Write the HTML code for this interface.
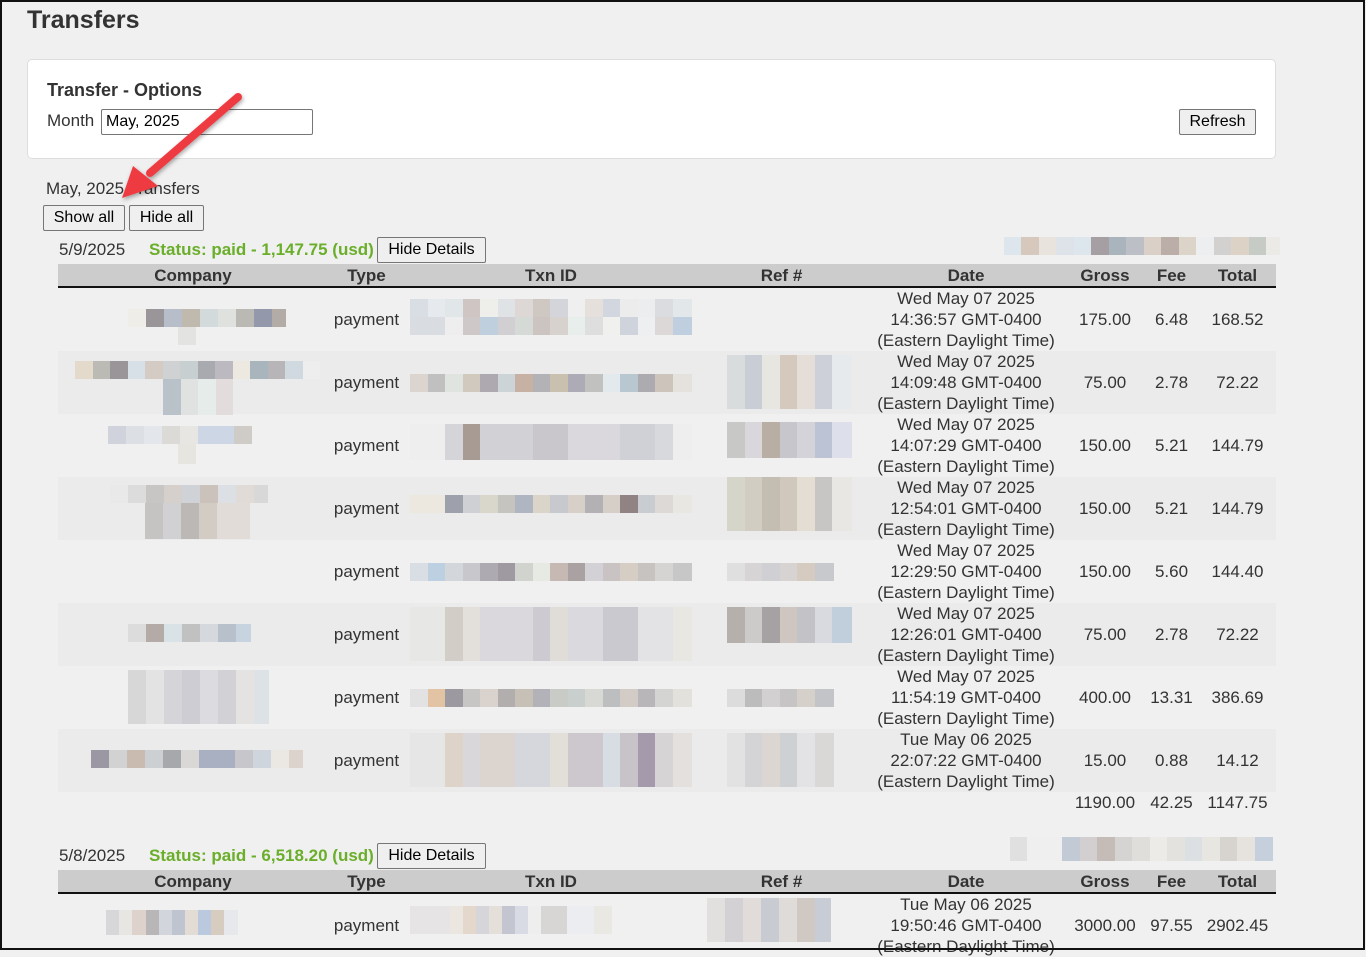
<!DOCTYPE html>
<html><head><meta charset="utf-8">
<style>
*{box-sizing:border-box}
html,body{margin:0;padding:0}
body{width:1366px;height:951px;overflow:hidden;background:#f0f0f0;font-family:"Liberation Sans",Arial,sans-serif;color:#333;position:relative}
.frame{position:absolute;left:0;top:0;width:1365px;height:950px;border:2px solid #111;pointer-events:none;z-index:5}
.abs{position:absolute}
h1{position:absolute;left:27px;top:6px;margin:0;font-size:25px;font-weight:bold;color:#333}
.card{position:absolute;left:27px;top:59px;width:1249px;height:100px;background:#fff;border:1px solid #ddd;border-radius:5px}
.btn{position:absolute;background:#efefef;border:1px solid #767676;border-radius:2px;font-size:16px;color:#000;text-align:center;line-height:23px;height:26px}
.green{color:#6aae2a;font-weight:bold}
table{position:absolute;left:58px;width:1218px;border-collapse:collapse;table-layout:fixed;font-size:17px;color:#333}
th{background:#ccc;height:23px;font-weight:bold;border-bottom:2px solid #111;padding:0;line-height:21px}
td{height:63px;padding:0;text-align:center;line-height:21px;position:relative}
tr.alt td{background:#ebebeb}
.px{position:absolute;height:18px}
</style></head><body>
<div class="frame"></div>
<h1>Transfers</h1>
<div class="card">
 <div class="abs" style="left:19px;top:20px;font-size:18px;font-weight:bold">Transfer - Options</div>
 <div class="abs" style="left:19px;top:51px;font-size:17px">Month</div>
 <div class="abs" style="left:73px;top:49px;width:212px;height:26px;border:1px solid #767676;border-radius:2px;font-size:16px;color:#000;padding:3px 0 0 4px">May, 2025</div>
 <div class="btn" style="left:1151px;top:49px;width:77px">Refresh</div>
</div>
<div class="abs" style="left:46px;top:179px;font-size:17px">May, 2025 Transfers</div>
<div class="btn" style="left:43px;top:205px;width:82px">Show all</div>
<div class="btn" style="left:129px;top:205px;width:75px">Hide all</div>

<div class="abs" style="left:59px;top:240px;font-size:17px">5/9/2025</div>
<div class="abs green" style="left:149px;top:240px;font-size:17px">Status: paid - 1,147.75 (usd)</div>
<div class="btn" style="left:377px;top:237px;width:109px">Hide Details</div>
<div class="px" style="left:1004px;top:237px;width:276px;background:linear-gradient(90deg,#dce6ec 0 17px,#d6c8bc 0 35px,#e8e4dd 0 52px,#dde3e8 0 70px,#dce6ec 0 87px,#a59ea2 0 105px,#a9b4bd 0 122px,#bcc0c6 0 140px,#dbd0c8 0 157px,#bbaea8 0 175px,#dcd3c9 0 192px,#eceef0 0 210px,#d2d1cf 0 227px,#dcd3c6 0 245px,#c6cbc5 0 262px,#eceae6 0)"></div>

<table style="top:264px">
<colgroup><col style="width:270px"><col style="width:77px"><col style="width:292px"><col style="width:169px"><col style="width:200px"><col style="width:78px"><col style="width:55px"><col style="width:77px"></colgroup>
<tr><th>Company</th><th>Type</th><th>Txn ID</th><th>Ref #</th><th>Date</th><th>Gross</th><th>Fee</th><th>Total</th></tr>
<tr><td><div class="px" style="left:70px;top:21px;width:158px;background:linear-gradient(90deg,#efede8 0 18px,#9a9598 0 36px,#b8bec9 0 54px,#c0b9ae 0 72px,#d3dadb 0 90px,#dfe1df 0 108px,#bbb9b4 0 126px,#9498ab 0 144px,#b3aba5 0 162px)"></div><div class="px" style="left:120px;top:39px;width:18px;background:#e3e3e1"></div></td><td>payment</td><td><div class="px" style="left:5px;top:11px;width:282px;background:linear-gradient(90deg,#d9dee5 0 18px,#e6eaee 0 35px,#e1e7e9 0 53px,#cfc6c4 0 70px,#eeeeea 0 88px,#e0e3e6 0 105px,#ddd8d5 0 123px,#cfc7c2 0 140px,#d3d5db 0 158px,#efefef 0 175px,#e5e0dc 0 193px,#d2d6de 0 210px,#ececec 0 228px,#ecedef 0 245px,#dadce0 0 263px,#e2e8ea 0)"></div><div class="px" style="left:5px;top:29px;width:282px;background:linear-gradient(90deg,#d9dde1 0 35px,#eee 0 53px,#cfc8c8 0 70px,#bfcfdd 0 88px,#d2cfd2 0 105px,#d5dad6 0 123px,#cbc4c0 0 140px,#d8d2ce 0 158px,#e8eeec 0 175px,#dedede 0 193px,#f0f0ee 0 210px,#cfd3dc 0 228px,#eeeff1 0 245px,#ddd8d8 0 263px,#bfcfe0 0)"></div></td><td></td><td>Wed May 07 2025<br>14:36:57 GMT-0400<br>(Eastern Daylight Time)</td><td>175.00</td><td>6.48</td><td>168.52</td></tr>
<tr class="alt"><td><div class="px" style="left:17px;top:10px;width:245px;background:linear-gradient(90deg,#e4dacb 0 18px,#bcbab4 0 35px,#9a9598 0 53px,#d8e0e7 0 70px,#d3cbc4 0 88px,#cfd1d3 0 105px,#c8cfd1 0 123px,#a8aaaf 0 140px,#bdb9c0 0 158px,#ede8e0 0 175px,#a8b5bd 0 193px,#b7b5b8 0 210px,#d1d9e0 0 228px,#eee 0)"></div><div class="px" style="left:105px;top:28px;width:70px;height:36px;background:linear-gradient(90deg,#b9c2c9 0 18px,#dfe2e0 0 35px,#e6ecea 0 53px,#e3dcdc 0)"></div></td><td>payment</td><td><div class="px" style="left:5px;top:23px;width:282px;background:linear-gradient(90deg,#dcd4cf 0 18px,#c0c0c1 0 35px,#e0e4e0 0 53px,#d1c9be 0 70px,#aea9b0 0 88px,#cdd4d8 0 105px,#c7b1a3 0 123px,#b2b2b7 0 140px,#cac0b0 0 158px,#adacb6 0 175px,#c1c2bf 0 193px,#e2eaee 0 210px,#b9c7d1 0 228px,#adabb0 0 245px,#cdc5bc 0 263px,#e5e1dc 0)"></div></td><td><div class="px" style="left:30px;top:4px;width:125px;height:54px;background:linear-gradient(90deg,#d9dcdc 0 18px,#c9cdd6 0 35px,#e8e6e0 0 53px,#d5c9bd 0 70px,#e5ded8 0 88px,#cdd0d8 0 105px,#e6eaec 0)"></div></td><td>Wed May 07 2025<br>14:09:48 GMT-0400<br>(Eastern Daylight Time)</td><td>75.00</td><td>2.78</td><td>72.22</td></tr>
<tr><td><div class="px" style="left:50px;top:12px;width:160px;background:linear-gradient(90deg,#d1d3dc 0 18px,#dcdfe3 0 36px,#e3e6ea 0 54px,#dcdad7 0 72px,#e7e6e3 0 90px,#ccd6e4 0 126px,#cfcbc6 0 144px,#f0f0f0 0)"></div><div class="px" style="left:120px;top:30px;width:18px;height:20px;background:#e7e5e0"></div></td><td>payment</td><td><div class="px" style="left:5px;top:10px;width:282px;height:36px;background:linear-gradient(90deg,#eee 0 35px,#d5d4d9 0 53px,#a89b93 0 70px,#d2d1d5 0 123px,#c9c7cc 0 158px,#dad8dc 0 210px,#cfd1d6 0 245px,#d8d9dd 0 263px,#eee 0)"></div></td><td><div class="px" style="left:30px;top:8px;width:125px;height:36px;background:linear-gradient(90deg,#c8c9c6 0 18px,#d9d7db 0 35px,#b8aea3 0 53px,#c7c6cc 0 70px,#d4d3da 0 88px,#bcc3d4 0 105px,#dde0ea 0)"></div></td><td>Wed May 07 2025<br>14:07:29 GMT-0400<br>(Eastern Daylight Time)</td><td>150.00</td><td>5.21</td><td>144.79</td></tr>
<tr class="alt"><td><div class="px" style="left:52px;top:8px;width:158px;background:linear-gradient(90deg,#e9e9e9 0 18px,#dcdcdc 0 36px,#c8c6c4 0 54px,#d6d0cd 0 72px,#cfd2d6 0 90px,#cbc2bb 0 108px,#dcdfe3 0 126px,#e0dbd6 0 144px,#d8d8d8 0)"></div><div class="px" style="left:87px;top:26px;width:105px;height:36px;background:linear-gradient(90deg,#c6c4c2 0 18px,#d1d1d4 0 36px,#bcb8b5 0 54px,#d3ccc4 0 72px,#e1dcd7 0)"></div></td><td>payment</td><td><div class="px" style="left:5px;top:18px;width:282px;background:linear-gradient(90deg,#ece8e0 0 35px,#9ea1ab 0 53px,#cfd0d4 0 70px,#d9d6cc 0 88px,#c6c4bf 0 105px,#b0b6c1 0 123px,#dad4c9 0 140px,#c7c9ce 0 158px,#d6d0c8 0 175px,#b3b1b4 0 193px,#d5cfc7 0 210px,#918383 0 228px,#c9cdd1 0 245px,#ddd9d6 0 263px,#e9e7e2 0)"></div></td><td><div class="px" style="left:30px;top:0;width:125px;height:54px;background:linear-gradient(90deg,#d5d6c9 0 18px,#d1cdc2 0 35px,#c4bdb2 0 53px,#d0c8bd 0 70px,#e3ddd3 0 88px,#c8c6c4 0 105px,#e8e7e4 0)"></div></td><td>Wed May 07 2025<br>12:54:01 GMT-0400<br>(Eastern Daylight Time)</td><td>150.00</td><td>5.21</td><td>144.79</td></tr>
<tr><td></td><td>payment</td><td><div class="px" style="left:5px;top:23px;width:282px;background:linear-gradient(90deg,#d9dee5 0 18px,#bdd0e2 0 35px,#d3d6db 0 53px,#c8c7cc 0 70px,#aeaab2 0 88px,#9f9aa2 0 105px,#d1d3cf 0 123px,#e7e9e3 0 140px,#c6b9b3 0 158px,#aaa1a3 0 175px,#d4d1d6 0 193px,#c9c3c3 0 210px,#d6cdc4 0 228px,#c6c3c1 0 245px,#d5d4d2 0 263px,#c7c7c7 0)"></div></td><td><div class="px" style="left:30px;top:23px;width:107px;background:linear-gradient(90deg,#dfdfdf 0 18px,#d6d4d4 0 35px,#cfcfd4 0 53px,#d7d3d2 0 70px,#d5cbc0 0 88px,#c7c9cc 0)"></div></td><td>Wed May 07 2025<br>12:29:50 GMT-0400<br>(Eastern Daylight Time)</td><td>150.00</td><td>5.60</td><td>144.40</td></tr>
<tr class="alt"><td><div class="px" style="left:70px;top:21px;width:123px;background:linear-gradient(90deg,#dcdcdc 0 18px,#b4aba6 0 36px,#d9e2e6 0 54px,#c1c1c1 0 72px,#d5d8dc 0 90px,#b7c0cb 0 108px,#c7d3de 0)"></div></td><td>payment</td><td><div class="px" style="left:5px;top:4px;width:282px;height:54px;background:linear-gradient(90deg,#e7e7e6 0 35px,#d3cdc8 0 53px,#e3e0dc 0 70px,#dad8dc 0 123px,#cdcbd1 0 140px,#e0ddd9 0 158px,#d9d9de 0 193px,#c9c9cf 0 228px,#e3e2e4 0 263px,#e9e7e1 0)"></div></td><td><div class="px" style="left:30px;top:4px;width:125px;height:36px;background:linear-gradient(90deg,#b6b0ad 0 18px,#cdcbc9 0 35px,#a6a1a3 0 53px,#cfc5c1 0 70px,#c3c2c6 0 88px,#d9dadf 0 105px,#c1cedb 0)"></div></td><td>Wed May 07 2025<br>12:26:01 GMT-0400<br>(Eastern Daylight Time)</td><td>75.00</td><td>2.78</td><td>72.22</td></tr>
<tr><td><div class="px" style="left:70px;top:4px;width:141px;height:54px;background:linear-gradient(90deg,#d7d7d7 0 18px,#e3e3e3 0 36px,#d5d4d9 0 54px,#cfcdd4 0 72px,#dcdbdf 0 90px,#d2d2d6 0 108px,#e5e3e1 0 126px,#dde2e7 0)"></div></td><td>payment</td><td><div class="px" style="left:5px;top:23px;width:282px;background:linear-gradient(90deg,#e2e2e2 0 18px,#e2c3a4 0 35px,#9c9aa0 0 53px,#c8c6c4 0 70px,#dad3cd 0 88px,#b3aeae 0 105px,#c7c0b6 0 123px,#b3b2b8 0 140px,#c9ccc6 0 158px,#c9cfcc 0 175px,#d8d8d4 0 193px,#bdbebf 0 210px,#d3ccc6 0 228px,#b8b6b8 0 245px,#d4d4d3 0 263px,#e3e1dc 0)"></div></td><td><div class="px" style="left:30px;top:23px;width:107px;background:linear-gradient(90deg,#dcdcdc 0 18px,#bcbcbc 0 35px,#d2d0d0 0 53px,#c6c4c5 0 70px,#d6d0ca 0 88px,#c3c4c8 0)"></div></td><td>Wed May 07 2025<br>11:54:19 GMT-0400<br>(Eastern Daylight Time)</td><td>400.00</td><td>13.31</td><td>386.69</td></tr>
<tr class="alt"><td><div class="px" style="left:33px;top:21px;width:212px;background:linear-gradient(90deg,#9b98a4 0 18px,#d3d2d3 0 36px,#c9bbaf 0 54px,#ccd0d3 0 72px,#a6a8ab 0 90px,#d9d8d6 0 108px,#a8b0c1 0 144px,#c7c7cb 0 162px,#cfd5dc 0 180px,#ebe8e4 0 198px,#dcd4cc 0)"></div></td><td>payment</td><td><div class="px" style="left:5px;top:4px;width:282px;height:54px;background:linear-gradient(90deg,#e6e6e6 0 35px,#ddd3c8 0 53px,#d9d7d9 0 70px,#dcd4cf 0 105px,#d6d7dc 0 140px,#e2ded8 0 158px,#ccc8cd 0 193px,#d8dde3 0 210px,#c8c3c8 0 228px,#a49aab 0 245px,#d7d4d6 0 263px,#e3e0dd 0)"></div></td><td><div class="px" style="left:30px;top:4px;width:107px;height:54px;background:linear-gradient(90deg,#e2e2e2 0 18px,#d4d4d6 0 35px,#dcd6d3 0 53px,#ced1d3 0 70px,#e3e3e5 0 88px,#d9d8d6 0)"></div></td><td>Tue May 06 2025<br>22:07:22 GMT-0400<br>(Eastern Daylight Time)</td><td>15.00</td><td>0.88</td><td>14.12</td></tr>
<tr><td style="height:21px"></td><td></td><td></td><td></td><td></td><td style="vertical-align:top">1190.00</td><td style="vertical-align:top">42.25</td><td style="vertical-align:top">1147.75</td></tr>
</table>

<div class="abs" style="left:59px;top:846px;font-size:17px">5/8/2025</div>
<div class="abs green" style="left:149px;top:846px;font-size:17px">Status: paid - 6,518.20 (usd)</div>
<div class="btn" style="left:377px;top:843px;width:109px">Hide Details</div>
<div class="px" style="left:1010px;top:837px;width:263px;height:24px;background:linear-gradient(90deg,#e0e0e0 0 17px,#efefef 0 52px,#c2cad6 0 70px,#d3cfd0 0 87px,#c5bcb8 0 105px,#d6d4d2 0 122px,#e0dedb 0 140px,#ecebe7 0 157px,#e4e2df 0 175px,#dde0e3 0 192px,#e8e6e1 0 210px,#d7d4d0 0 227px,#e6e3df 0 245px,#c6cfdc 0)"></div>

<table style="top:870px">
<colgroup><col style="width:270px"><col style="width:77px"><col style="width:292px"><col style="width:169px"><col style="width:200px"><col style="width:78px"><col style="width:55px"><col style="width:77px"></colgroup>
<tr><th>Company</th><th>Type</th><th>Txn ID</th><th>Ref #</th><th>Date</th><th>Gross</th><th>Fee</th><th>Total</th></tr>
<tr><td style="vertical-align:top;padding-top:0"><div class="px" style="left:48px;top:16px;width:132px;height:25px;background:linear-gradient(90deg,#d7d7da 0 13px,#e8e6e3 0 26px,#ddd3cc 0 40px,#b8b6b6 0 53px,#d3d5dd 0 66px,#bec5d0 0 79px,#e3dcd4 0 92px,#bac9de 0 105px,#d7ccc0 0 118px,#e6e8ec 0)"></div></td><td style="vertical-align:top;padding-top:21px">payment</td><td><div class="px" style="left:5px;top:12px;width:202px;height:28px;background:linear-gradient(90deg,#e6e4e4 0 40px,#ebe6e0 0 53px,#e4d8cc 0 66px,#d5d5da 0 79px,#e5dfd9 0 92px,#c3c5d0 0 105px,#d8dbe4 0 118px,#eee 0 131px,#d8d6d5 0 157px,#ecedf0 0 184px,#e9e8e2 0)"></div></td><td><div class="px" style="left:10px;top:4px;width:124px;height:44px;background:linear-gradient(90deg,#e2dfdf 0 18px,#d4d1d4 0 36px,#e1dcda 0 54px,#c9cbd2 0 72px,#dedbd8 0 90px,#d0c8c2 0 108px,#c8ccd4 0)"></div></td><td style="vertical-align:top">Tue May 06 2025<br>19:50:46 GMT-0400<br>(Eastern Daylight Time)</td><td style="vertical-align:top;padding-top:21px">3000.00</td><td style="vertical-align:top;padding-top:21px">97.55</td><td style="vertical-align:top;padding-top:21px">2902.45</td></tr>
</table>

<svg class="abs" style="left:0;top:0;z-index:4" width="1366" height="951">
<defs><filter id="sh" x="-20%" y="-20%" width="140%" height="140%"><feDropShadow dx="1" dy="2" stdDeviation="2" flood-color="#000" flood-opacity="0.35"/></filter></defs>
<g filter="url(#sh)">
<line x1="238" y1="97" x2="150" y2="173" stroke="#ee3b43" stroke-width="8" stroke-linecap="round"/>
<polygon points="122,198 133,166 158,186" fill="#ee3b43"/>
</g>
</svg>
</body></html>
